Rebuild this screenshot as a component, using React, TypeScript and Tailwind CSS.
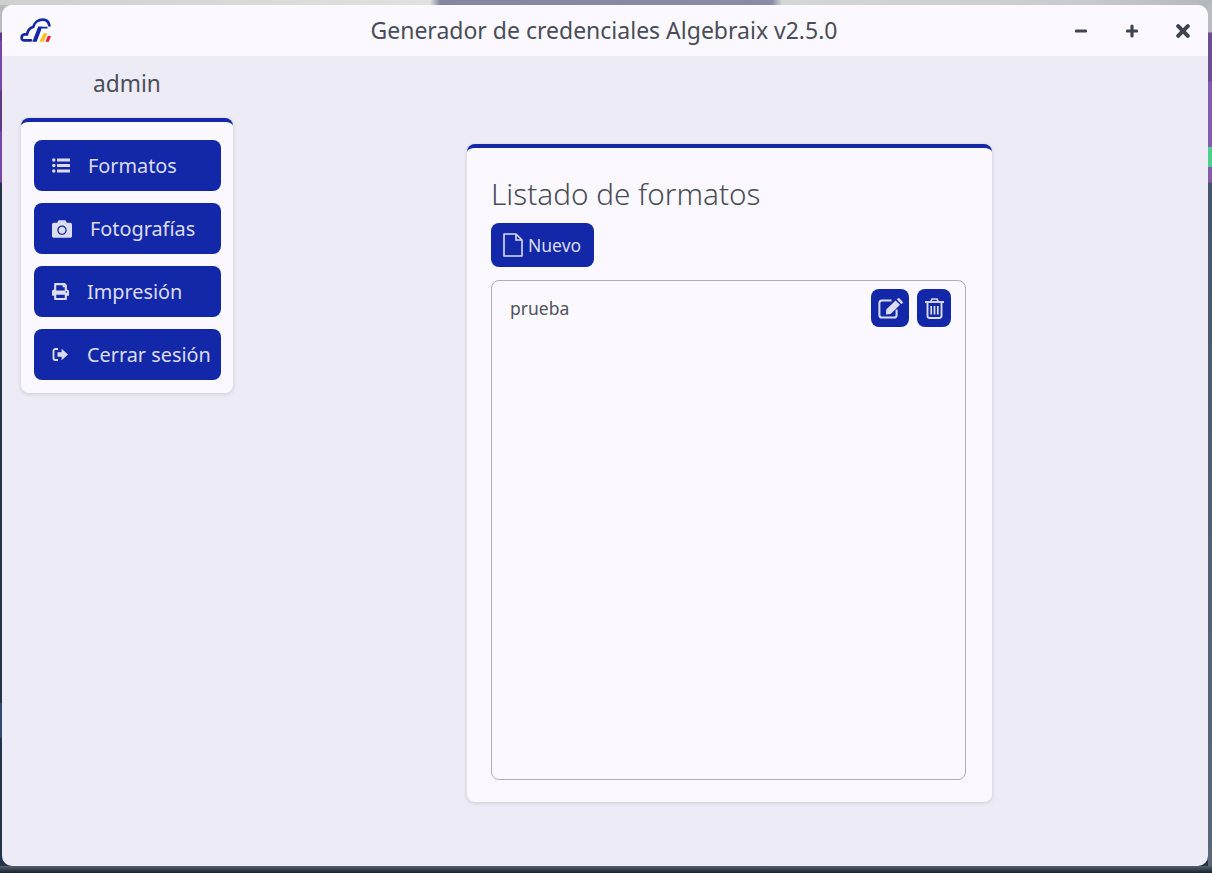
import React from "react";
import { FaCamera, FaPrint } from "react-icons/fa";

function Logo() {
  return (
    <svg width="31" height="25" viewBox="0 0 31 25" fill="none">
      <path d="M11 22.3H3.8C0.8 22.3 0.8 16.6 4.6 16.3H7C7.8 12.4 10.2 9.8 13.2 9C14.4 4.2 18.6 1.6 22.8 1.6C26.6 1.6 28.8 4 29.4 7.4" stroke="#1228a8" strokeWidth="2.7" strokeLinecap="round" />
      <path d="M18.2 8.6H22.4L16.6 23.8H12.4Z" fill="#1228a8" />
      <path d="M22 9.6H27.5" stroke="#1228a8" strokeWidth="1.8" />
      <path d="M23.6 15.2H27.6L23.6 23.8H19.4Z" fill="#fcc419" />
      <path d="M27.8 18H31L28.8 23.8H25.4Z" fill="#f5183c" />
    </svg>
  );
}

function ListIcon() {
  return (
    <svg width="18" height="15" viewBox="0 0 18 15" fill="currentColor">
      <circle cx="1.8" cy="2" r="1.7" />
      <circle cx="1.8" cy="7.5" r="1.7" />
      <circle cx="1.8" cy="13" r="1.7" />
      <rect x="5" y="0.4" width="13" height="3.2" rx="0.5" />
      <rect x="5" y="5.9" width="13" height="3.2" rx="0.5" />
      <rect x="5" y="11.4" width="13" height="3.2" rx="0.5" />
    </svg>
  );
}

function SignOutIcon() {
  return (
    <svg width="16" height="15" viewBox="0 0 16 15" fill="currentColor">
      <path d="M6 2H3.4A1.9 1.9 0 0 0 1.5 3.9V11.1A1.9 1.9 0 0 0 3.4 13H6" fill="none" stroke="currentColor" strokeWidth="1.9" />
      <path d="M5.5 5.2H9.6V1.8L16 7.5L9.6 13.2V9.8H5.5Z" />
    </svg>
  );
}

function FileIcon() {
  return (
    <svg width="20" height="24" viewBox="0 0 20 24" fill="none" stroke="currentColor" strokeWidth="1.6">
      <path d="M1 1H13L19 7V23H1Z" strokeLinejoin="round" />
      <path d="M13 1V7H19" />
    </svg>
  );
}

function EditIcon() {
  return (
    <svg width="25" height="21" viewBox="0 0 25 21" fill="none">
      <path d="M13.5 2.5H4A2.6 2.6 0 0 0 1.4 5.1V16.9A2.6 2.6 0 0 0 4 19.5H16A2.6 2.6 0 0 0 18.6 16.9V11.5" stroke="currentColor" strokeWidth="2" />
      <path d="M8.2 11.6L17.6 2.4L22 6.8L12.6 16L8 16.6Z" fill="currentColor" />
      <path d="M18.8 1.3L19.6 0.6C20.2 0 21 0 21.6 0.6L24.4 3.4C25 4 25 4.8 24.4 5.4L23.2 6Z" fill="currentColor" />
    </svg>
  );
}

function TrashIcon() {
  return (
    <svg width="19" height="21" viewBox="0 0 19 21" fill="none" stroke="currentColor">
      <path d="M5.8 3.4L7 1H12L13.2 3.4" strokeWidth="1.6" />
      <path d="M0 4H19" strokeWidth="1.9" />
      <path d="M2.5 4.5V17.8A2.2 2.2 0 0 0 4.7 20H14.3A2.2 2.2 0 0 0 16.5 17.8V4.5" strokeWidth="1.9" />
      <path d="M6.2 8V16.5M9.5 8V16.5M12.8 8V16.5" strokeWidth="1.7" />
    </svg>
  );
}

function MinusIcon() {
  return (
    <svg width="12" height="14" viewBox="0 0 12 14" stroke="currentColor" strokeWidth="3.2" strokeLinecap="round">
      <path d="M1.5 7H10.5" />
    </svg>
  );
}

function PlusIcon() {
  return (
    <svg width="12" height="14" viewBox="0 0 12 14" stroke="currentColor" strokeWidth="3.2" strokeLinecap="round">
      <path d="M1.5 7H10.5M6 2V12" />
    </svg>
  );
}

function CloseIcon() {
  return (
    <svg width="14" height="14" viewBox="0 0 14 14" stroke="currentColor" strokeWidth="4" strokeLinecap="round">
      <path d="M2.2 2.2L11.8 11.8M11.8 2.2L2.2 11.8" />
    </svg>
  );
}

function NavButton({ icon, label, gap }: { icon: React.ReactNode; label: string; gap: string }) {
  return (
    <button className={`flex h-[51px] w-full items-center rounded-lg bg-[#1228a8] pl-[18px] text-[19.85px] text-[#dcdcee] ${gap}`}>
      {icon}
      <span>{label}</span>
    </button>
  );
}

export default function App() {
  return (
    <div
      className="h-[873px] w-[1212px] overflow-hidden pt-[5px] pr-[4px] pb-[7px] pl-[2px] [background:linear-gradient(180deg,#55606c,#16222e)_0_866px/100%_7px_no-repeat,linear-gradient(90deg,#cdd0cf_0,#dfe2df_430px,#85879f_440px,#8a8ca6_770px,#8a8ca6_772px,#d4d7d6_782px,#c8ccd0_1080px,#b4b8bc_1212px)_0_0/100%_5px_no-repeat,linear-gradient(180deg,#b8bcc2_0,#b8bcc2_32px,#6a4e8e_33px,#6a4e8e_81px,#835cab_82px,#835cab_147px,#4fd08a_147px,#4fd08a_167px,#835cab_167px,#835cab_182px,#46566a_183px,#5a6878_873px)_100%_0/4px_100%_no-repeat,linear-gradient(180deg,#b8bbbe_0,#b8bbbe_32px,#5d3a82_33px,#5d3a82_40px,#7a45a5_41px,#7a45a5_90px,#5d3a82_91px,#5d3a82_131px,#7a45a5_132px,#7a45a5_182px,#24324a_183px,#24324a_703px,#2f4a70_703px,#2f4a70_738px,#24324a_738px,#24324a_873px)]"
      style={{ fontFamily: '"Noto Sans", "Open Sans", sans-serif' }}
    >
      <div className="flex h-[861px] w-[1206px] flex-col overflow-hidden rounded-[10px] bg-[#edecf6] text-[#4a4d58]">
        <header className="flex h-[51px] shrink-0 items-center bg-[#fbf9ff] pr-[18px] pl-[18px]">
          <Logo />
          <h1 className="ml-[82px] flex-1 text-center text-[23px] leading-none text-[#4a4d58]">Generador de credenciales Algebraix v2.5.0</h1>
          <div className="flex items-center gap-[39px] text-[#3f4450]">
            <MinusIcon />
            <PlusIcon />
            <div className="-ml-px"><CloseIcon /></div>
          </div>
        </header>

        <div className="flex flex-1 pl-[19px]">
          <aside className="w-[212px] shrink-0">
            <div className="flex h-[62px] items-center justify-center pb-[5px] text-[22.7px] text-[#4a4d58]">admin</div>
            <nav className="flex flex-col gap-[12px] rounded-lg border-t-[4px] border-[#1228a8] bg-[#fbf9ff] pt-[18px] pr-[12px] pb-[13px] pl-[13px] shadow-[0_1px_4px_rgba(0,0,0,0.15)]">
              <NavButton icon={<ListIcon />} label="Formatos" gap="gap-[18px]" />
              <NavButton icon={<FaCamera className="h-[20px] w-[20px]" />} label="Fotografías" gap="gap-[18px]" />
              <NavButton icon={<FaPrint className="h-[17px] w-[17px]" />} label="Impresión" gap="gap-[18px]" />
              <NavButton icon={<SignOutIcon />} label="Cerrar sesión" gap="gap-[19px]" />
            </nav>
          </aside>

          <main className="ml-[234px] mt-[88px]">
            <section className="flex h-[658px] w-[525px] flex-col rounded-lg border-t-[4px] border-[#1228a8] bg-[#fbf9ff] px-[24px] shadow-[0_1px_4px_rgba(0,0,0,0.15)]">
              <h2 className="mt-[27px] text-[29.7px] leading-[38px] font-light text-[#4a4d58]">Listado de formatos</h2>
              <button className="mt-[10px] flex h-[44px] w-[103px] items-center gap-[5px] rounded-lg bg-[#1228a8] pl-[12px] text-[17.5px] text-[#dcdcee]">
                <FileIcon />
                <span>Nuevo</span>
              </button>
              <div className="mt-[13px] flex h-[500px] w-[475px] items-start justify-between rounded-lg border border-[#aeaeb4] pt-[8px] pr-[14px] pl-[18px]">
                <span className="pt-[7px] text-[17.5px] leading-[24px] text-[#50525c]">prueba</span>
                <div className="flex gap-[8px]">
                  <button className="flex h-[38px] w-[38px] items-center justify-center rounded-lg bg-[#1228a8] text-[#dcdcee]">
                    <EditIcon />
                  </button>
                  <button className="flex h-[38px] w-[34px] items-center justify-center rounded-lg bg-[#1228a8] text-[#dcdcee]">
                    <TrashIcon />
                  </button>
                </div>
              </div>
            </section>
          </main>
        </div>
      </div>
    </div>
  );
}
